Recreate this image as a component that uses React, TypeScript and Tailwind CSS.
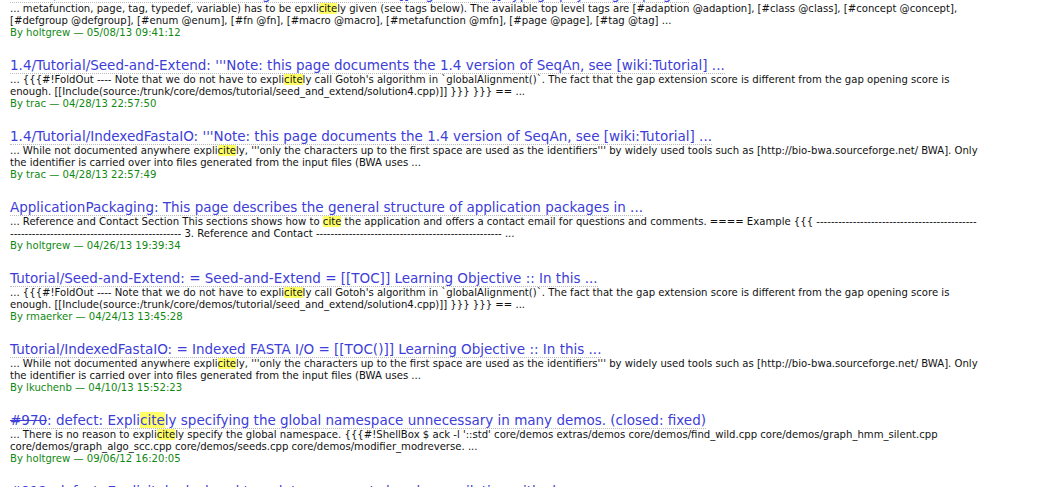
import React from "react";

type Result = {
    title: React.ReactNode;
    lines: string[];
    author: string;
    date: string;
};

// "^" marks the start/end of a highlighted search word
function Marked({ text }: { text: string }) {
    const parts = text.split("^");
    return (
        <>
            {parts.map((p, i) =>
                i % 2 === 1 ? (
                    <span key={i} className="bg-[#ffff66]">
                        {p}
                    </span>
                ) : (
                    <React.Fragment key={i}>{p}</React.Fragment>
                )
            )}
        </>
    );
}

const seedLines = [
    "... {{{#!FoldOut ---- Note that we do not have to expli^cite^ly call Gotoh's algorithm in `globalAlignment()`. The fact that the gap extension score is different from the gap opening score is",
    "enough. [[Include(source:/trunk/core/demos/tutorial/seed_and_extend/solution4.cpp)]] }}} }}} == ...",
];

const fastaLines = [
    "... While not documented anywhere expli^cite^ly, '''only the characters up to the first space are used as the identifiers''' by widely used tools such as [http://bio-bwa.sourceforge.net/ BWA]. Only",
    "the identifier is carried over into files generated from the input files (BWA uses ...",
];

const dashes = (n: number) => "-".repeat(n);

const results: Result[] = [
    {
        title: "HowTo/WriteDocumentation: = Writing Documentation = [[PageOutline]] Typography for grouping ...",
        lines: [
            "... metafunction, page, tag, typedef, variable) has to be epxli^cite^ly given (see tags below). The available top level tags are [#adaption @adaption], [#class @class], [#concept @concept],",
            "[#defgroup @defgroup], [#enum @enum], [#fn @fn], [#macro @macro], [#metafunction @mfn], [#page @page], [#tag @tag] ...",
        ],
        author: "holtgrew",
        date: "05/08/13 09:41:12",
    },
    {
        title: "1.4/Tutorial/Seed-and-Extend: '''Note: this page documents the 1.4 version of SeqAn, see [wiki:Tutorial] ...",
        lines: seedLines,
        author: "trac",
        date: "04/28/13 22:57:50",
    },
    {
        title: "1.4/Tutorial/IndexedFastaIO: '''Note: this page documents the 1.4 version of SeqAn, see [wiki:Tutorial] ...",
        lines: fastaLines,
        author: "trac",
        date: "04/28/13 22:57:49",
    },
    {
        title: "ApplicationPackaging: This page describes the general structure of application packages in ...",
        lines: [
            "... Reference and Contact Section This sections shows how to ^cite^ the application and offers a contact email for questions and comments. ==== Example {{{ " + dashes(44),
            dashes(47) + " 3. Reference and Contact " + dashes(51) + " ...",
        ],
        author: "holtgrew",
        date: "04/26/13 19:39:34",
    },
    {
        title: "Tutorial/Seed-and-Extend: = Seed-and-Extend = [[TOC]] Learning Objective :: In this ...",
        lines: seedLines,
        author: "rmaerker",
        date: "04/24/13 13:45:28",
    },
    {
        title: "Tutorial/IndexedFastaIO: = Indexed FASTA I/O = [[TOC()]] Learning Objective :: In this ...",
        lines: fastaLines,
        author: "lkuchenb",
        date: "04/10/13 15:52:23",
    },
    {
        title: (
            <>
                <span className="line-through">#970</span>
                <span>: defect: Expli</span>
                <span className="bg-[#ffff66]">cite</span>
                <span>ly specifying the global namespace unnecessary in many demos. (closed: fixed)</span>
            </>
        ),
        lines: [
            "... There is no reason to expli^cite^ly specify the global namespace. {{{#!ShellBox $ ack -l '::std' core/demos extras/demos core/demos/find_wild.cpp core/demos/graph_hmm_silent.cpp",
            "core/demos/graph_algo_scc.cpp core/demos/seeds.cpp core/demos/modifier_modreverse. ...",
        ],
        author: "holtgrew",
        date: "09/06/12 16:20:05",
    },
    {
        title: "#912: defect: Explicitely declared template arguments break compilation with clang",
        lines: ["", ""],
        author: "holtgrew",
        date: "",
    },
];

export default function App() {
    return (
        <div className="h-[487px] w-[1057px] overflow-hidden bg-white font-['DejaVu_Sans',Verdana,sans-serif]">
            <dl className="-mt-[13px] flex flex-col pl-[10px]">
                {results.map((r, idx) => (
                    <div key={idx} className="mb-[19px] flex flex-col items-start">
                        <dt className="block w-fit whitespace-nowrap border-b border-dotted border-[#bbbbbb] text-[13.5px] leading-[15px] text-[#3d3dd8]">
                            {r.title}
                        </dt>
                        <dd className="text-[10.1px] leading-[12px] text-[#111111]">
                            {r.lines.map((l, i) => (
                                <div key={i} className="h-[12px] whitespace-nowrap">
                                    <Marked text={l} />
                                </div>
                            ))}
                            <div className="h-[12px] whitespace-nowrap text-[#118811]">
                                By {r.author} — {r.date}
                            </div>
                        </dd>
                    </div>
                ))}
            </dl>
        </div>
    );
}
